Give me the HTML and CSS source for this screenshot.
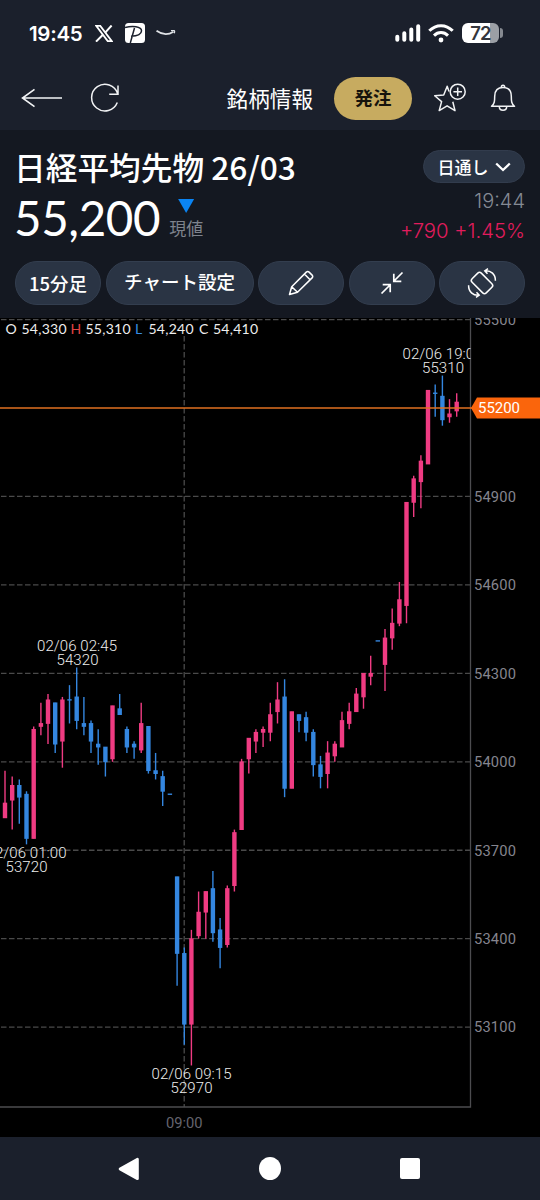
FILE: index.html
```html
<!DOCTYPE html>
<html lang="ja">
<head>
    <meta charset="UTF-8">
    <meta name="viewport" content="width=device-width, initial-scale=1.0">
    <title>日経平均先物 26/03</title>
    <link rel="stylesheet" href="styles.css">
</head>
<body>
    <div class="status-bar">
        <span class="clock">19:45</span>
        <svg class="icon-x" width="18" height="17" viewBox="0 0 18 17" fill="none" stroke="#fff">
            <path d="M1.200.9h4.100L16.800 16.100h-4.100z" stroke-width="1.800"/>
            <path d="M16.600.5 10.200 7.700M7.600 10 1 16.600" stroke-width="2"/>
        </svg>
        <svg class="icon-pay" width="20" height="20" viewBox="0 0 20 20" fill="none">
            <rect width="20" height="20" rx="3.500" fill="#fff"/>
            <path d="M0 4.600C7 2.800 16.700 3.200 16.500 8c-.2 4-5.500 5-10.500 5.200M9.500 5 5.300 20" stroke="#1b202c" stroke-width="1.500"/>
        </svg>
        <svg class="icon-smile" width="20" height="6" viewBox="0 0 20 6" fill="none" stroke="#dfe2e6">
            <path d="M.5.8c5.500 3.900 11.800 4.200 17 .9" stroke-width="1.800"/>
            <path d="M15 .7c2.500-.5 4.500-.7 3.200 2.600" stroke-width="1.300"/>
        </svg>
        <div class="status-right">
            <svg width="26" height="18" viewBox="0 0 26 18" stroke="#fff" stroke-width="4" stroke-linecap="round">
                <path d="M2.300 12.800v3M9.300 9.200v6.600M16.300 5.500v10.300M23.200 2.200v13.600"/>
            </svg>
            <svg width="26" height="19" viewBox="0 0 26 19" fill="none" stroke="#fff" stroke-width="3">
                <path d="M1.300 6.800C8-.1 18-.1 24.700 6.800M6 11.600c4.100-4 9.900-4 14 0"/>
                <circle cx="13" cy="16" r="2.400" fill="#fff" stroke="none"/>
            </svg>
            <div class="battery"><span>72</span></div>
        </div>
    </div>

    <div class="nav-bar">
        <svg class="back" width="42" height="20" viewBox="0 0 42 20" fill="none" stroke="#f2f3f5" stroke-width="1.600">
            <path d="M41 10H1.500M13.500 1.300 1.500 10l12 8.700"/>
        </svg>
        <svg class="reload" width="30" height="30" viewBox="0 0 30 30" fill="none" stroke="#f2f3f5" stroke-width="1.500">
            <path d="M27.300 19.500A13.300 13.300 0 1 1 27.600 10.500M28 2.500v8.800h-8.800"/>
        </svg>
        <span class="nav-title">銘柄情報</span>
        <button class="order">発注</button>
        <svg class="star" width="34" height="30" viewBox="0 0 34 30" fill="none" stroke="#f2f3f5" stroke-width="1.500" stroke-linejoin="round">
            <path d="M16 8.500 14.200 3.300 10.700 12 1.700 12.700 8.600 18.600 6.200 27.600 14.100 22.800 22 27.600 19.800 18.800"/>
            <circle cx="24.700" cy="8.700" r="7.500"/>
            <path d="M24.700 4.400V13M20.400 8.700H29"/>
        </svg>
        <svg class="bell" width="26" height="28" viewBox="0 0 26 28" fill="none" stroke="#f2f3f5" stroke-width="1.500" stroke-linejoin="round">
            <path d="M1.500 22.300c3-2.500 3.200-5 3.200-10.100C4.700 6.400 7.800 3.400 13 3.400s8.300 3 8.300 8.800c0 5.100.2 7.600 3.200 10.100z"/>
            <path d="M11.300 3.200C11.300.7 14.700.7 14.700 3.200M9.300 22.500c0 5 7.400 5 7.400 0"/>
        </svg>
    </div>

    <div class="quote">
        <div class="quote-left">
            <h1>日経平均先物 26/03</h1>
            <div class="price-row">
                <span class="price">55,200</span>
                <div class="price-side">
                    <div class="down"></div>
                    <span>現値</span>
                </div>
            </div>
        </div>
        <div class="quote-right">
            <div class="session">日通し
                <svg width="16" height="10" viewBox="0 0 16 10" fill="none" stroke="#fff" stroke-width="2.300"><path d="m1.200 1.500 6.800 6.500 6.800-6.500"/></svg>
            </div>
            <div class="time">19:44</div>
            <div class="change">+790 +1.45%</div>
        </div>
        <div class="tools">
            <button class="tool tool-period">15分足</button>
            <button class="tool tool-wide">チャート設定</button>
            <button class="tool">
                <svg width="26" height="26" viewBox="0 0 26 26" fill="none" stroke="#fff" stroke-width="1.500" stroke-linejoin="round">
                    <path d="m1.500 24.500 2.200-7.800L18.300 2.100q1.400-1.200 2.800 0l3 3q1.200 1.400 0 2.800L9.500 22.300zM3.700 16.700l5.800 5.600M16.400 4l5.700 5.700"/>
                </svg>
            </button>
            <button class="tool">
                <svg width="24" height="24" viewBox="0 0 24 24" fill="none" stroke="#fff" stroke-width="1.700">
                    <path d="M22.500 1.500 14 10M13.800 2.800v7.500h7.500M1.500 22.500 10 14M2.700 13.700h7.500v7.500"/>
                </svg>
            </button>
            <button class="tool">
                <svg width="30" height="30" viewBox="0 0 30 30" fill="none" stroke="#fff" stroke-width="1.500">
                    <rect x="8.500" y="5" width="13" height="20" rx="2.500" transform="rotate(-45 15 15)"/>
                    <path d="M17.800 2.800C24 2.200 28.600 6.300 28.400 12.700M21 .7l-3.200 2.100 2.700 3M12.200 27.200C6 27.800 1.400 23.700 1.600 17.300M9 29.300l3.200-2.100-2.700-3"/>
                </svg>
            </button>
        </div>
    </div>

    <svg id="chart" class="chart" width="540" height="819" viewBox="0 318 540 819"></svg>

    <div class="system-nav">
        <svg width="22" height="24" viewBox="0 0 22 24"><path d="M2 12 19.500 2.200v19.600z" fill="#fff" stroke="#fff" stroke-width="2.600" stroke-linejoin="round"/></svg>
        <div class="home"></div>
        <div class="recent"></div>
    </div>

    <script src="chart.js"></script>
</body>
</html>
```
FILE: styles.css
```css
* {
    box-sizing: border-box;
}

body {
    margin: 0;
    width: 540px;
    height: 1200px;
    overflow: hidden;
    background: #1b202c;
    color: #fff;
    font-family: "Noto Sans CJK JP", sans-serif;
}

svg {
    display: block;
    flex-shrink: 0;
}

button {
    border: none;
    padding: 0;
    color: #fff;
    font-family: inherit;
}

.status-bar {
    display: flex;
    align-items: center;
    height: 66px;
    padding: 0 38px 0 29px;
}

.clock {
    width: 54px;
    font: 600 20.500px Inter, sans-serif;
    letter-spacing: -0.3px;
    white-space: nowrap;
}

.icon-x {
    margin-left: 12px;
}

.icon-pay {
    margin-left: 12px;
}

.icon-smile {
    margin-left: 11px;
}

.status-right {
    display: flex;
    align-items: center;
    gap: 7px;
    margin-left: auto;
    margin-right: -1px;
}

.battery {
    position: relative;
    width: 37px;
    height: 20px;
    margin-left: 1px;
    margin-right: 4px;
    border-radius: 6px;
    background: linear-gradient(90deg, #fff 76%, #9b9fa5 76%);
    color: #34363c;
    font: 600 18.500px/20px Inter, sans-serif;
    letter-spacing: -0.8px;
    text-align: center;
}

.battery::after {
    content: "";
    position: absolute;
    left: 38px;
    top: 5px;
    width: 3px;
    height: 10px;
    border-radius: 0 3px 3px 0;
    background: #858990;
}

.nav-bar {
    display: flex;
    align-items: center;
    height: 64px;
    padding: 0 24px 0 21px;
}

.reload {
    margin-left: 27px;
}

.nav-title {
    margin-left: auto;
    padding-bottom: 2px;
    font-size: 21.600px;
}

.order {
    width: 78px;
    height: 43px;
    margin-left: 21px;
    padding-bottom: 2px;
    border-radius: 22px;
    background: #c7ab60;
    color: #16130c;
    font-size: 18.500px;
    font-weight: 700;
}

.star {
    margin-left: 21px;
}

.bell {
    margin-left: 23px;
}

.quote {
    display: grid;
    grid-template-columns: 1fr auto;
    grid-template-rows: 131px 43px;
    height: 188px;
    padding: 0 15px 0 15px;
    background: #141821;
}

.quote-left {
    margin-left: -1px;
}

h1 {
    margin: 15px 0 0;
    font-size: 31.700px;
    font-weight: 500;
    line-height: 42px;
    letter-spacing: 0;
    white-space: nowrap;
}

.price-row {
    display: flex;
}

.price {
    padding-top: 2px;
    font: 47.500px/58px Lato, sans-serif;
    letter-spacing: -0.4px;
}

.price-side {
    display: flex;
    flex-direction: column;
    margin-left: 9px;
    padding-top: 1px;
    color: #7e838d;
    font-size: 17px;
    line-height: 22px;
}

.down {
    width: 16px;
    height: 14px;
    margin: 11px 0 4px 9px;
    background: #0a84f4;
    clip-path: polygon(0 0, 100% 0, 50% 100%);
}

.quote-right {
    display: flex;
    flex-direction: column;
    align-items: flex-end;
    padding-top: 20px;
}

.session {
    display: flex;
    align-items: center;
    justify-content: center;
    gap: 6px;
    width: 102px;
    height: 33px;
    border: 1px solid #323c4d;
    border-radius: 17px;
    background: #2a3444;
    font-size: 17px;
    font-weight: 500;
}

.time {
    margin-top: 4px;
    color: #858a94;
    font: 300 20px/29px Inter, sans-serif;
}

.change {
    color: #e21c5d;
    font: 300 20.300px/29px Inter, sans-serif;
    white-space: nowrap;
}

.tools {
    grid-column: 1 / 3;
    display: grid;
    grid-template-columns: 86px 148px 86px 86px 86px;
    justify-content: space-between;
}

.tool {
    display: flex;
    align-items: center;
    justify-content: center;
    height: 44px;
    border: 1px solid #333e4f;
    border-radius: 22px;
    background: #2a3444;
    font-size: 18.500px;
    font-weight: 500;
}

.tool-period {
    padding-bottom: 1px;
}

.tool-wide {
    padding-bottom: 4px;
}

.chart {
    background: #000;
}

.grid-line {
    stroke: #4a4a4a;
    stroke-width: 1.3;
    stroke-dasharray: 5.500 2.500;
}

.axis {
    stroke: #4c4c4f;
    stroke-width: 1.3;
    fill: none;
}

.axis-label,
.time-label {
    font: 14.700px Roboto, sans-serif;
    fill: #85858e;
}

.time-label {
    fill: #65656f;
}

.point-label {
    font: 300 15px Roboto, sans-serif;
    fill: #eee;
    text-anchor: middle;
}

.up {
    stroke: #ef3b82;
}

.fall {
    stroke: #3486df;
}

.wick {
    stroke-width: 1.4;
}

.stick {
    stroke-width: 4.4;
}

.ohlc {
    font: 14px Lato, sans-serif;
    fill: #eee;
}

.ohlc-high {
    fill: #e14444;
}

.ohlc-low {
    fill: #378ce5;
}

.now-line {
    stroke: #e07020;
    stroke-width: 1.3;
}

.now-tag {
    fill: #fa650c;
}

.now-text {
    font: 15px Roboto, sans-serif;
    fill: #fff;
}

.system-nav {
    display: flex;
    align-items: center;
    justify-content: space-between;
    height: 63px;
    padding: 0 120px 0 118px;
}

.home {
    width: 22px;
    height: 23px;
    border-radius: 50%;
    background: #fff;
}

.recent {
    width: 20px;
    height: 21px;
    border-radius: 2px;
    background: #fff;
}
```
FILE: chart.js
```js
const chart = document.getElementById('chart');

// [type, high, body top, body bottom, low]
const candles = [
    ['u', 53970, 53860, 53810, 53810], ['u', 53950, 53920, 53870, 53770],
    ['d', 53940, 53920, 53880, 53790], ['d', 53900, 53890, 53740, 53720],
    ['u', 54120, 54110, 53740, 53740], ['u', 54200, 54130, 54120, 54090],
    ['u', 54230, 54210, 54130, 54060], ['d', 54200, 54200, 54060, 54030],
    ['u', 54220, 54210, 54070, 53980], ['d', 54260, 54210, 54210, 54130],
    ['d', 54320, 54220, 54140, 54110], ['d', 54220, 54130, 54120, 54090],
    ['d', 54140, 54130, 54070, 54030], ['d', 54110, 54060, 54050, 53990],
    ['d', 54050, 54050, 54000, 53950], ['u', 54190, 54190, 54010, 54000],
    ['d', 54230, 54180, 54160, 54160], ['d', 54120, 54110, 54050, 54030],
    ['d', 54070, 54060, 54050, 54010], ['u', 54200, 54130, 54040, 54030],
    ['d', 54120, 54120, 53970, 53960], ['d', 54030, 53970, 53960, 53940],
    ['d', 53970, 53950, 53900, 53850], ['d', 53890, 53890, 53890, 53890],
    ['d', 53610, 53610, 53350, 53240], ['d', 53370, 53350, 53110, 53040],
    ['u', 53430, 53400, 53110, 52970], ['u', 53560, 53490, 53410, 53400],
    ['u', 53560, 53560, 53490, 53400], ['d', 53630, 53570, 53420, 53390],
    ['d', 53470, 53430, 53370, 53300], ['u', 53580, 53570, 53380, 53370],
    ['u', 53770, 53760, 53580, 53560], ['u', 54010, 54000, 53770, 53770],
    ['u', 54080, 54080, 54010, 53960], ['u', 54110, 54100, 54070, 54030],
    ['u', 54120, 54110, 54100, 54050], ['u', 54200, 54160, 54100, 54070],
    ['u', 54270, 54210, 54170, 54130], ['d', 54280, 54220, 53910, 53880],
    ['u', 54170, 54170, 53910, 53910], ['d', 54160, 54160, 54140, 54100],
    ['d', 54170, 54150, 54100, 54070], ['d', 54110, 54100, 53990, 53950],
    ['d', 54020, 53990, 53950, 53910], ['u', 54070, 54030, 53960, 53910],
    ['u', 54070, 54060, 54020, 54000], ['u', 54170, 54140, 54050, 54050],
    ['u', 54200, 54170, 54130, 54110], ['u', 54250, 54230, 54170, 54170],
    ['u', 54300, 54300, 54220, 54180], ['u', 54360, 54300, 54290, 54260],
    ['d', 54410, 54410, 54410, 54410], ['u', 54450, 54420, 54330, 54240],
    ['u', 54520, 54470, 54420, 54380], ['u', 54610, 54550, 54470, 54460],
    ['u', 54880, 54880, 54530, 54470], ['u', 54970, 54960, 54880, 54830],
    ['u', 55040, 55020, 54950, 54860], ['u', 55260, 55260, 55010, 55010],
    ['d', 55280, 55250, 55250, 55170], ['d', 55310, 55240, 55160, 55140],
    ['u', 55230, 55180, 55170, 55150], ['u', 55250, 55220, 55190, 55170]
];

const RIGHT = 470.5;
const BOTTOM = 1107;

function yOf(price) {
    return 408 + (55200 - price) * 0.29483;
}

function line(cls, x1, y1, x2, y2) {
    return `<line class="${cls}" x1="${x1}" y1="${y1}" x2="${x2}" y2="${y2}"/>`;
}

function text(cls, x, y, value, width) {
    const fit = width ? ` textLength="${width}"` : '';
    return `<text class="${cls}" x="${x}" y="${y}"${fit}>${value}</text>`;
}

let out = `<clipPath id="plot"><rect x="0" y="318" width="${RIGHT}" height="${BOTTOM - 318}"/></clipPath>`;

// grid
for (let p = 53100; p <= 55500; p += 300) {
    if (p !== 55200) {
        out += line('grid-line', 1, yOf(p), RIGHT, yOf(p));
        out += text('axis-label', 474, yOf(p) + 5.3, p, 42);
    }
}
out += line('grid-line', 184.2, 336, 184.2, BOTTOM);
out += `<path class="axis" d="M${RIGHT} 318V${BOTTOM}H0"/>`;
out += text('time-label', 166, 1128, '09:00', 36.5);

// candles
candles.forEach(([type, high, top, bottom, low], i) => {
    const x = (5 + i * 7.17).toFixed(1);
    const cls = type === 'u' ? 'up' : 'fall';
    const pad = top === bottom ? 0.7 : 0.4;
    if (high !== low) {
        out += line(cls + ' wick', x, yOf(high), x, yOf(low));
    }
    out += line(cls + ' stick', x, yOf(top) - pad, x, yOf(bottom) + pad);
});

// high / low labels
out += '<g clip-path="url(#plot)">';
out += text('point-label', 77, 650.5, '02/06 02:45', 80);
out += text('point-label', 77.5, 665, '54320', 42);
out += text('point-label', 26.5, 857.5, '02/06 01:00', 80);
out += text('point-label', 26.5, 871.5, '53720', 42);
out += text('point-label', 191.5, 1078.5, '02/06 09:15', 80);
out += text('point-label', 191.5, 1092.5, '52970', 42);
out += text('point-label', 442.5, 358.5, '02/06 19:00', 80);
out += text('point-label', 443, 373, '55310', 42);
out += '</g>';

// open, high, low, close
out += text('ohlc', 5.5, 334, 'O', 12);
out += text('ohlc', 21.5, 334, '54,330', 45);
out += text('ohlc ohlc-high', 70.5, 334, 'H', 11);
out += text('ohlc', 85.5, 334, '55,310', 45);
out += text('ohlc ohlc-low', 135, 334, 'L', 8);
out += text('ohlc', 148.5, 334, '54,240', 45);
out += text('ohlc', 199, 334, 'C', 11);
out += text('ohlc', 213, 334, '54,410', 45);

// current price
out += line('now-line', 0, 408, 473, 408);
out += '<path class="now-tag" d="M471 408 477 397.500H540V418.500H477Z"/>';
out += text('now-text', 478, 413.3, '55200', 42);

chart.innerHTML = out;
```
